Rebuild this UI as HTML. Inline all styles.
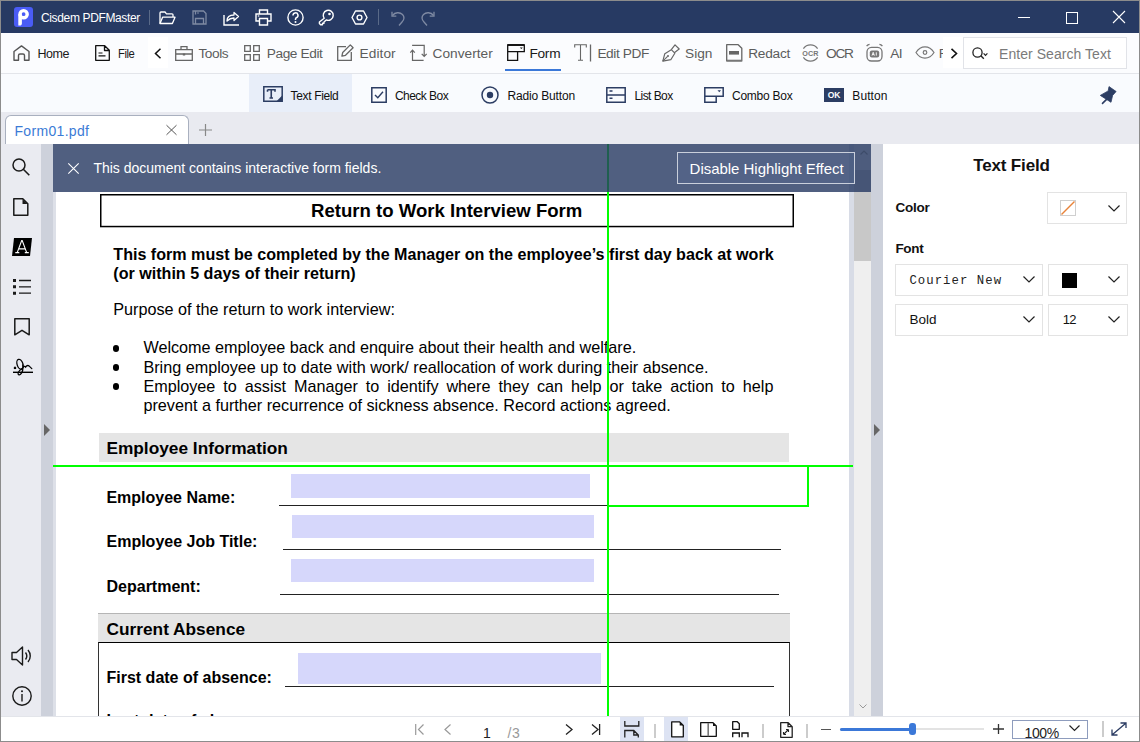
<!DOCTYPE html>
<html><head><meta charset="utf-8">
<style>
*{margin:0;padding:0;box-sizing:border-box}
html,body{width:1140px;height:742px;overflow:hidden;background:#fff}
body{position:relative;font-family:"Liberation Sans",sans-serif}
.a{position:absolute}
svg{position:absolute;overflow:visible}
.t{position:absolute;white-space:nowrap;line-height:1}
.doc{font-family:'Liberation Sans',sans-serif;color:#000}
</style></head><body>
<!-- window border -->
<div class="a" style="left:0;top:0;width:1140px;height:742px;border:1px solid #8c8c8c;z-index:50;pointer-events:none"></div>

<!-- TITLE BAR -->
<div class="a" style="left:0;top:0;width:1140px;height:33px;background:#273a63"></div>
<svg style="left:14px;top:7px" width="19" height="20" viewBox="0 0 19 20"><rect x="0" y="0" width="19" height="20" rx="3" fill="#4a5cf6"/><circle cx="9.6" cy="7.2" r="3.6" fill="none" stroke="#fff" stroke-width="3.4"/><path d="M4.3 7.2h3.6v9.2c0 1-.8 2.2-2 2.2h-1.6z" fill="#fff"/></svg>
<div class="t" style="left:41px;top:11.7px;font-size:12px;color:#fff;font-weight:normal;font-family:'Liberation Sans',sans-serif;letter-spacing:-0.36px">Cisdem PDFMaster</div>

<div class="a" style="left:149px;top:10px;width:1px;height:15px;background:#5a6a88"></div>


<!-- title icons -->
<svg style="left:159px;top:11px" width="17" height="14" viewBox="0 0 17 14"><path d="M1 12.5V2a1 1 0 0 1 1-1h4l1.5 1.8H13a1 1 0 0 1 1 1V6" fill="none" stroke="#fff" stroke-width="1.3"/><path d="M1 12.5l2.6-6.3h12.4l-2.6 6.3z" fill="none" stroke="#fff" stroke-width="1.3" stroke-linejoin="round"/></svg>
<svg style="left:192px;top:10px" width="15" height="15" viewBox="0 0 15 15"><path d="M1 1h10.5L14 3.5V14H1z M3.5 14V8.5h8V14 M3.5 1v3.5" fill="none" stroke="#7f8aa3" stroke-width="1.3"/><path d="M5 3h2" stroke="#7f8aa3" stroke-width="1"/></svg>
<svg style="left:223px;top:10px" width="17" height="16" viewBox="0 0 17 16"><path d="M1 5v10h15" fill="none" stroke="#fff" stroke-width="1.4"/><path d="M4 11c0-4 3-6 7-6V2.5l4.5 4-4.5 4V8c-3 0-5 1-7 3z" fill="none" stroke="#fff" stroke-width="1.3" stroke-linejoin="round"/></svg>
<svg style="left:255px;top:9px" width="17" height="17" viewBox="0 0 17 17"><path d="M4.5 4.5V1h8v3.5 M4.5 12H1V5h15v7h-3.5 M4.5 9.5h8V16h-8z" fill="none" stroke="#fff" stroke-width="1.4"/><path d="M2.8 7h1.5" stroke="#fff" stroke-width="1.2"/></svg>
<svg style="left:287px;top:9px" width="17" height="17" viewBox="0 0 17 17"><circle cx="8.5" cy="8.5" r="7.6" fill="none" stroke="#fff" stroke-width="1.4"/><path d="M6 6.4a2.5 2.5 0 1 1 3.4 2.3c-.7.3-.9.8-.9 1.6v.6" fill="none" stroke="#fff" stroke-width="1.5"/><circle cx="8.5" cy="13" r="1" fill="#fff"/></svg>
<svg style="left:318px;top:9px" width="17" height="17" viewBox="0 0 17 17"><path d="M6.2 9.3a5 5 0 1 1 2 1.6L6 13v1.3H4.5v1.5H2.6l-1.2-1.2V13z" fill="none" stroke="#fff" stroke-width="1.4" stroke-linejoin="round"/><circle cx="11.5" cy="5" r="1.3" fill="#fff"/></svg>
<svg style="left:351px;top:10px" width="17" height="15" viewBox="0 0 17 15"><path d="M4.5 1h8L16 7.5 12.5 14h-8L1 7.5z" fill="none" stroke="#fff" stroke-width="1.4" stroke-linejoin="round"/><circle cx="8.5" cy="7.5" r="2.4" fill="none" stroke="#fff" stroke-width="1.4"/></svg>
<div class="a" style="left:378px;top:9px;width:1px;height:16px;background:#5a6a88"></div>
<svg style="left:391px;top:11px" width="14" height="15" viewBox="0 0 14 15"><path d="M1.5 4.5C4 1 9 1 11.5 3.5c2 2.2 1.8 5-0.5 7.5L8 14.5" fill="none" stroke="#7f8aa3" stroke-width="1.3"/><path d="M1 .8v4.3h4.3" fill="none" stroke="#7f8aa3" stroke-width="1.3"/></svg>
<svg style="left:421px;top:11px" width="14" height="15" viewBox="0 0 14 15"><path d="M12.5 4.5C10 1 5 1 2.5 3.5c-2 2.2-1.8 5 .5 7.5L6 14.5" fill="none" stroke="#7f8aa3" stroke-width="1.3"/><path d="M13 .8v4.3H8.7" fill="none" stroke="#7f8aa3" stroke-width="1.3"/></svg>
<div class="a" style="left:1018px;top:17px;width:12px;height:1px;background:#fff"></div>
<div class="a" style="left:1066px;top:12px;width:12px;height:12px;border:1px solid #fff"></div>
<svg style="left:1113px;top:11px" width="12" height="12" viewBox="0 0 12 12"><path d="M0 0L12 12M12 0L0 12" stroke="#fff" stroke-width="1.1"/></svg>
<div class="a" style="left:0;top:33px;width:1140px;height:40px;background:#fbfcfe"></div>
<div class="a" style="left:0;top:73px;width:1140px;height:1px;background:#e3e5ea"></div>
<!--TOOLBAR-->
<svg style="left:13px;top:45px" width="17" height="16" viewBox="0 0 17 16"><path d="M1 15.2V6.5L8.5 .9 16 6.5v8.7h-4.5V10.5a1.5 1.5 0 0 0-1.5-1.5H7a1.5 1.5 0 0 0-1.5 1.5v4.7z" fill="none" stroke="#555" stroke-width="1.4" stroke-linejoin="round"/></svg>
<div class="t" style="left:37.5px;top:47.6px;font-size:12.5px;color:#1a1a1a;font-weight:normal;font-family:'Liberation Sans',sans-serif;letter-spacing:-0.5px">Home</div>
<svg style="left:95px;top:45px" width="15" height="16" viewBox="0 0 15 16"><path d="M.7 .7h9l4.6 4.6v10H.7z M9.5 .7v4.8h4.8" fill="none" stroke="#111" stroke-width="1.3" stroke-linejoin="round"/><path d="M3.5 8h4M3.5 10.8h7" stroke="#111" stroke-width="1.2"/></svg>
<div class="t" style="left:118px;top:47.6px;font-size:12.5px;color:#1a1a1a;font-weight:normal;font-family:'Liberation Sans',sans-serif;letter-spacing:-0.5px;transform:scaleX(0.9);transform-origin:0 0">File</div>
<div class="a" style="left:148px;top:37px;width:20px;height:31px;background:#fff"></div>
<svg style="left:154px;top:48px" width="8" height="11" viewBox="0 0 8 11"><path d="M6.5 .8L1.5 5.5l5 4.7" fill="none" stroke="#111" stroke-width="1.5"/></svg>
<svg style="left:175px;top:46px" width="18" height="15" viewBox="0 0 18 15"><path d="M.7 3.7h16.6v10.6H.7z M.7 8h16.6 M6 3.7V.7h6v3" fill="none" stroke="#666" stroke-width="1.3"/><path d="M7.8 7.5h2.4v2H7.8z" fill="#666"/></svg>
<div class="t" style="left:198.4px;top:46.8px;font-size:13.7px;color:#5c5c5c;font-weight:normal;font-family:'Liberation Sans',sans-serif;letter-spacing:-0.43px">Tools</div>
<svg style="left:244px;top:45px" width="16" height="16" viewBox="0 0 16 16"><path d="M.7 .7h5.6v5.6H.7z M9.7 .7h5.6v5.6H9.7z M.7 9.7h5.6v5.6H.7z M9.7 9.7h5.6v5.6H9.7z" fill="none" stroke="#666" stroke-width="1.3"/></svg>
<div class="t" style="left:266.7px;top:46.8px;font-size:13.7px;color:#5c5c5c;font-weight:normal;font-family:'Liberation Sans',sans-serif;letter-spacing:-0.39px">Page Edit</div>
<svg style="left:337px;top:44px" width="17" height="17" viewBox="0 0 17 17"><path d="M9 2.7H.7v13.6h13.6V8" fill="none" stroke="#666" stroke-width="1.3"/><path d="M13.3.9l2.8 2.8-7.6 7.6-3.6.8.8-3.6z" fill="none" stroke="#666" stroke-width="1.3" stroke-linejoin="round"/></svg>
<div class="t" style="left:359.5px;top:46.8px;font-size:13.7px;color:#5c5c5c;font-weight:normal;font-family:'Liberation Sans',sans-serif;letter-spacing:0.08px">Editor</div>
<svg style="left:410px;top:44px" width="18" height="18" viewBox="0 0 18 18"><path d="M2.5 6.2V16.3h11.1 M.3 8.6L2.5 6.2l2.3 2.4" fill="none" stroke="#666" stroke-width="1.2"/><path d="M2.1 1.3h12.1v11 M11.7 9.8l2.5 2.5 2.5-2.5" fill="none" stroke="#666" stroke-width="1.2"/></svg>
<div class="t" style="left:432.6px;top:46.8px;font-size:13.7px;color:#5c5c5c;font-weight:normal;font-family:'Liberation Sans',sans-serif;letter-spacing:0.01px">Converter</div>
<svg style="left:507px;top:44px" width="18" height="17" viewBox="0 0 18 17"><path d="M.7 1h16.6v6.6H10.6v8.7H.7z M.7 7.6h9.9" fill="none" stroke="#111" stroke-width="1.3"/><path d="M.7 1h16.6" stroke="#111" stroke-width="1.8"/><path d="M12.8 3.4h3l-1.5 1.6z" fill="#111"/></svg>
<div class="t" style="left:529.5px;top:46.8px;font-size:13.7px;color:#1a1a1a;font-weight:normal;font-family:'Liberation Sans',sans-serif;letter-spacing:-0.30px">Form</div>
<div class="a" style="left:505px;top:69px;width:56px;height:2px;background:#3b78d8"></div>
<svg style="left:574px;top:44px" width="18" height="18" viewBox="0 0 18 18"><path d="M.7 3.5V.8h11.6v2.7 M6.5 .8v15.5 M4 16.3h5" fill="none" stroke="#666" stroke-width="1.1"/><path d="M16.5 .5v17" stroke="#666" stroke-width="1.3"/></svg>
<div class="t" style="left:597.4px;top:46.8px;font-size:13.7px;color:#5c5c5c;font-weight:normal;font-family:'Liberation Sans',sans-serif;letter-spacing:-0.40px">Edit PDF</div>
<svg style="left:662px;top:44px" width="18" height="18" viewBox="0 0 18 18"><path d="M.8 17.2l2-7.5 6.5-4 3.5 3.5-4 6.5z" fill="none" stroke="#666" stroke-width="1.2" stroke-linejoin="round"/><path d="M9.3 5.7L13 .8l4.2 4.2-4.9 3.7" fill="none" stroke="#666" stroke-width="1.2" stroke-linejoin="round"/><path d="M.8 17.2l4.8-4.8" stroke="#666" stroke-width="1.1"/><circle cx="6" cy="12" r="1" fill="#666"/></svg>
<div class="t" style="left:685px;top:46.8px;font-size:13.7px;color:#5c5c5c;font-weight:normal;font-family:'Liberation Sans',sans-serif;letter-spacing:0.00px">Sign</div>
<svg style="left:726px;top:44px" width="17" height="18" viewBox="0 0 17 18"><path d="M.7 .7h11.5l3.6 3.6v12.6H.7z" fill="none" stroke="#666" stroke-width="1.3" stroke-linejoin="round"/><path d="M.7 16.6h15.1" stroke="#777" stroke-width="1.8"/><path d="M3 7h10v3.6H3z" fill="#666"/></svg>
<div class="t" style="left:748.2px;top:46.8px;font-size:13.7px;color:#5c5c5c;font-weight:normal;font-family:'Liberation Sans',sans-serif;letter-spacing:-0.24px">Redact</div>
<svg style="left:801px;top:43px" width="19" height="20" viewBox="0 0 19 20"><path d="M2.4 5.6A8.6 8.6 0 0 1 16.6 5.6 M16.6 14.4A8.6 8.6 0 0 1 2.4 14.4" fill="none" stroke="#777" stroke-width="1.2"/><text x="9.5" y="12.7" font-size="7.2" font-family="Liberation Sans" fill="#777" text-anchor="middle" font-weight="bold" letter-spacing="0.1">OCR</text></svg>
<div class="t" style="left:826px;top:46.8px;font-size:13.7px;color:#5c5c5c;font-weight:normal;font-family:'Liberation Sans',sans-serif;letter-spacing:-1.25px">OCR</div>
<svg style="left:866px;top:43px" width="17" height="19" viewBox="0 0 17 19"><rect x="1" y="4.3" width="15" height="13.7" rx="4.5" fill="none" stroke="#777" stroke-width="1.3"/><path d="M.6 3.2C1.5 1.8 2.5 1.3 3.6 1.3 M16.4 3.2C15.5 1.8 14.5 1.3 13.4 1.3" fill="none" stroke="#777" stroke-width="1.3"/><rect x="3.8" y="7.5" width="9.4" height="7" rx="2" fill="#777"/><path d="M6 12.6l1.2-3.3 1.2 3.3 M6.4 11.6h1.6 M10.3 9.3v3.3" fill="none" stroke="#fff" stroke-width="0.9"/></svg>
<div class="t" style="left:890.3px;top:46.8px;font-size:13.7px;color:#5c5c5c;font-weight:normal;font-family:'Liberation Sans',sans-serif;letter-spacing:-0.60px">AI</div>
<svg style="left:915px;top:46px" width="20" height="13" viewBox="0 0 20 13"><path d="M1 6.5C3.5 2.5 6.5 .8 10 .8s6.5 1.7 9 5.7c-2.5 4-5.5 5.7-9 5.7S3.5 10.5 1 6.5z" fill="none" stroke="#777" stroke-width="1.2"/><circle cx="10" cy="6.5" r="1.8" fill="none" stroke="#777" stroke-width="1.2"/></svg>
<div class="t" style="left:938.7px;top:46.8px;font-size:13.7px;color:#5c5c5c;font-weight:normal;font-family:'Liberation Sans',sans-serif;letter-spacing:0.00px">F</div>
<div class="a" style="left:943px;top:37px;width:20px;height:31px;background:#fff"></div>
<svg style="left:950px;top:48px" width="8" height="11" viewBox="0 0 8 11"><path d="M1.5 .8l5 4.7-5 4.7" fill="none" stroke="#111" stroke-width="1.6"/></svg>
<div class="a" style="left:963px;top:37px;width:164px;height:32px;background:#fff;border:1px solid #e1e3e8"></div>
<svg style="left:972px;top:47px" width="16" height="13" viewBox="0 0 16 13"><circle cx="5.5" cy="5.5" r="4.6" fill="none" stroke="#222" stroke-width="1.3"/><path d="M8.8 8.8l3 3" stroke="#222" stroke-width="1.4"/><path d="M11.6 6.4l1.9 1.9 1.9-1.9" fill="none" stroke="#222" stroke-width="1.2"/></svg>
<div class="t" style="left:999px;top:46.6px;font-size:14px;color:#7a7a7a;font-weight:normal;font-family:'Liberation Sans',sans-serif;letter-spacing:0.05px">Enter Search Text</div>

<div class="a" style="left:0;top:74px;width:1140px;height:38px;background:#f9fbfe"></div>
<!--FORMROW-->
<div class="a" style="left:249px;top:74px;width:103px;height:38px;background:#e8eef9"></div>
<svg style="left:263px;top:86px" width="20" height="16" viewBox="0 0 20 16"><path d="M.8 .8h18.4v14.4H.8z" fill="none" stroke="#2c3d63" stroke-width="1.5"/><path d="M19.2 9.5v5.7h-5.7z" fill="#2c3d63"/><path d="M4.5 3.8h7.5v2 M8.25 3.8v8.2 M6.5 12h3.5 M4.5 3.8v2" fill="none" stroke="#2c3d63" stroke-width="1.6"/></svg>
<div class="t" style="left:290.6px;top:90.0px;font-size:12px;color:#111;font-weight:normal;font-family:'Liberation Sans',sans-serif;letter-spacing:-0.35px">Text Field</div>
<svg style="left:371px;top:87px" width="16" height="16" viewBox="0 0 16 16"><path d="M.8 .8h14.4v14.4H.8z" fill="none" stroke="#2c3d63" stroke-width="1.5"/><path d="M4 8l2.8 2.8L12 4.8" fill="none" stroke="#2c3d63" stroke-width="1.4"/></svg>
<div class="t" style="left:395px;top:90.0px;font-size:12px;color:#111;font-weight:normal;font-family:'Liberation Sans',sans-serif;letter-spacing:-0.55px">Check Box</div>
<svg style="left:481px;top:86px" width="18" height="18" viewBox="0 0 18 18"><circle cx="9" cy="9" r="8" fill="none" stroke="#2c3d63" stroke-width="1.5"/><circle cx="9" cy="9" r="3.2" fill="#2c3d63"/></svg>
<div class="t" style="left:507.4px;top:90.0px;font-size:12px;color:#111;font-weight:normal;font-family:'Liberation Sans',sans-serif;letter-spacing:-0.15px">Radio Button</div>
<svg style="left:606px;top:87px" width="20" height="16" viewBox="0 0 20 16"><path d="M.8 .8h18.4v14.4H.8z M.8 8h18.4" fill="none" stroke="#2c3d63" stroke-width="1.5"/><path d="M3.5 4h3M3.5 11.3h3" stroke="#2c3d63" stroke-width="1.5"/></svg>
<div class="t" style="left:634.4px;top:90.0px;font-size:12px;color:#111;font-weight:normal;font-family:'Liberation Sans',sans-serif;letter-spacing:-0.55px">List Box</div>
<svg style="left:704px;top:87px" width="20" height="16" viewBox="0 0 20 16"><path d="M.8 .8h18.4v8.4h-7v6H.8z M.8 9.2h11.4" fill="none" stroke="#2c3d63" stroke-width="1.5"/><path d="M13.5 3.3h3.5l-1.75 1.9z" fill="#2c3d63"/></svg>
<div class="t" style="left:732px;top:90.0px;font-size:12px;color:#111;font-weight:normal;font-family:'Liberation Sans',sans-serif;letter-spacing:-0.25px">Combo Box</div>
<div class="a" style="left:824px;top:88px;width:20px;height:14px;background:#2c3d63"></div>
<div class="t" style="left:824px;top:91px;width:20px;text-align:center;font-size:8.5px;font-weight:bold;color:#fff">OK</div>
<div class="t" style="left:852.3px;top:90.0px;font-size:12px;color:#111;font-weight:normal;font-family:'Liberation Sans',sans-serif;letter-spacing:0.1px">Button</div>
<svg style="left:1099px;top:86px" width="18" height="18" viewBox="0 0 18 18"><path d="M10 .6L17.1 5.5 13.6 9.4 12 16.3 7.6 13.4 1.3 9.4 9.2 4.9z" fill="#2c3d63" stroke="#2c3d63" stroke-width="0.8" stroke-linejoin="round"/><path d="M8.6 12.4L3.5 17.4" stroke="#2c3d63" stroke-width="1.6" stroke-linecap="round"/></svg>
<div class="a" style="left:0;top:112px;width:1140px;height:32px;background:#e9eaf0"></div>

<!--TAB-->
<div class="a" style="left:5px;top:115px;width:184px;height:29px;background:#fff;border:1px solid #a9b0bf;border-bottom:none;border-radius:6px 6px 0 0"></div>
<div class="t" style="left:14.5px;top:123.6px;font-size:14px;color:#3b7bd6;font-weight:normal;font-family:'Liberation Sans',sans-serif;letter-spacing:0.32px">Form01.pdf</div>
<svg style="left:166px;top:125px" width="11" height="10" viewBox="0 0 11 10"><path d="M.5 .2l10 9.6M10.5 .2l-10 9.6" stroke="#555" stroke-width="1"/></svg>
<svg style="left:199px;top:124px" width="13" height="12" viewBox="0 0 13 12"><path d="M6.5 0v12M0 6h13" stroke="#888" stroke-width="1.2"/></svg>
<!-- main -->
<div class="a" style="left:0;top:144px;width:41px;height:572px;background:#eaebf1"></div>
<div class="a" style="left:41px;top:144px;width:12px;height:572px;background:#cdd1db"></div>
<div class="a" style="left:53px;top:144px;width:818px;height:572px;background:#fff"></div>
<div class="a" style="left:53px;top:192px;width:3px;height:524px;background:#dde0e8"></div>
<div class="a" style="left:849px;top:144px;width:5px;height:572px;background:#d8dce6"></div>
<div class="a" style="left:854px;top:144px;width:17px;height:572px;background:#efefef"></div>
<div class="a" style="left:854px;top:170px;width:17px;height:91px;background:#c8c8c8"></div>
<div class="a" style="left:871px;top:144px;width:12px;height:572px;background:#cdd1db"></div>
<div class="a" style="left:883px;top:144px;width:257px;height:572px;background:#fff"></div>
<!--DOC-->
<div class="a" style="left:0;top:0;width:854px;height:716px;overflow:hidden">
<svg style="left:0;top:0" width="1140" height="742"><rect x="100.75" y="194.75" width="692.5" height="31.8" fill="none" stroke="#000" stroke-width="1.5"/></svg>
<div class="t" style="left:311px;top:202.0px;font-size:18.6px;color:#000;font-weight:bold;font-family:'Liberation Sans',sans-serif;">Return to Work Interview Form</div>
<div class="t" style="left:113.3px;top:246.3px;font-size:16.1px;color:#000;font-weight:bold;font-family:'Liberation Sans',sans-serif;">This form must be completed by the Manager on the employee’s first day back at work</div>
<div class="t" style="left:113.3px;top:265.0px;font-size:16.1px;color:#000;font-weight:bold;font-family:'Liberation Sans',sans-serif;">(or within 5 days of their return)</div>
<div class="t" style="left:113.3px;top:300.7px;font-size:16.2px;color:#000;font-weight:normal;font-family:'Liberation Sans',sans-serif;">Purpose of the return to work interview:</div>
<div class="a" style="left:113px;top:345.2px;width:6.4px;height:6.4px;border-radius:50%;background:#000"></div>
<div class="a" style="left:113px;top:364.4px;width:6.4px;height:6.4px;border-radius:50%;background:#000"></div>
<div class="a" style="left:113px;top:383.4px;width:6.4px;height:6.4px;border-radius:50%;background:#000"></div>
<div class="t" style="left:143.4px;top:339.3px;font-size:16.2px;color:#000;font-weight:normal;font-family:'Liberation Sans',sans-serif;">Welcome employee back and enquire about their health and welfare.</div>
<div class="t" style="left:143.4px;top:359.1px;font-size:16.2px;color:#000;font-weight:normal;font-family:'Liberation Sans',sans-serif;">Bring employee up to date with work/ reallocation of work during their absence.</div>
<div class="t" style="left:143.4px;top:377.9px;width:630px;font-size:16.2px;text-align:justify;text-align-last:justify;white-space:normal">Employee to assist Manager to identify where they can help or take action to help</div>
<div class="t" style="left:143.4px;top:396.6px;font-size:16.2px;color:#000;font-weight:normal;font-family:'Liberation Sans',sans-serif;">prevent a further recurrence of sickness absence. Record actions agreed.</div>
<div class="a" style="left:99px;top:433px;width:690px;height:29px;background:#e5e5e5"></div>
<div class="t" style="left:106.4px;top:439.7px;font-size:17.3px;color:#000;font-weight:bold;font-family:'Liberation Sans',sans-serif;">Employee Information</div>
<div class="t" style="left:106.4px;top:489.7px;font-size:16px;color:#000;font-weight:bold;font-family:'Liberation Sans',sans-serif;">Employee Name:</div>
<div class="t" style="left:106.5px;top:533.5px;font-size:16px;color:#000;font-weight:bold;font-family:'Liberation Sans',sans-serif;">Employee Job Title:</div>
<div class="t" style="left:106.5px;top:578.6px;font-size:16px;color:#000;font-weight:bold;font-family:'Liberation Sans',sans-serif;">Department:</div>
<div class="a" style="left:291px;top:474px;width:299px;height:24px;background:#d6d7fb"></div>
<div class="a" style="left:291.5px;top:515px;width:302px;height:23px;background:#d6d7fb"></div>
<div class="a" style="left:290.5px;top:559px;width:303px;height:23px;background:#d6d7fb"></div>
<div class="a" style="left:279px;top:504.5px;width:329px;height:1.3px;background:#222"></div>
<div class="a" style="left:282.5px;top:549px;width:498.5px;height:1.3px;background:#222"></div>
<div class="a" style="left:279.5px;top:594px;width:499px;height:1.3px;background:#222"></div>
<div class="a" style="left:98.2px;top:613px;width:691.5px;height:29px;background:#e5e5e5;border-top:1px solid #b5b5b5"></div>
<div class="t" style="left:106.5px;top:620.7px;font-size:17.3px;color:#000;font-weight:bold;font-family:'Liberation Sans',sans-serif;">Current Absence</div>
<div class="a" style="left:98.2px;top:641.8px;width:691.8px;height:80px;border:1.5px solid #333;border-top:1.6px solid #000;border-bottom:none"></div>
<div class="t" style="left:106.5px;top:670.2px;font-size:16px;color:#000;font-weight:bold;font-family:'Liberation Sans',sans-serif;">First date of absence:</div>
<div class="a" style="left:298px;top:653px;width:302.7px;height:31px;background:#d6d7fb"></div>
<div class="a" style="left:284.7px;top:685.8px;width:489px;height:1.3px;background:#222"></div>
<div class="t" style="left:106.5px;top:712.5px;font-size:16px;color:#000;font-weight:bold;font-family:'Liberation Sans',sans-serif;">Last date of absence:</div>
<div class="a" style="left:607px;top:465px;width:202px;height:41.5px;background:#fff;border:2px solid #00ff00"></div>
<div class="a" style="left:53px;top:465px;width:800px;height:2px;background:#00ff00"></div>
<div class="a" style="left:607px;top:144px;width:2px;height:572px;background:#00ff00"></div>
</div>
<!--NOTIF-->
<div class="a" style="left:53px;top:144px;width:818px;height:48px;background:rgba(39,58,99,0.81)"></div>
<svg style="left:68px;top:163px" width="11" height="11" viewBox="0 0 11 11"><path d="M.3 .3l10.4 10.4M10.7 .3L.3 10.7" stroke="#fff" stroke-width="1.1"/></svg>
<div class="t" style="left:93.4px;top:161.4px;font-size:14px;color:#fff;font-weight:normal;font-family:'Liberation Sans',sans-serif;">This document contains interactive form fields.</div>
<div class="a" style="left:677px;top:152px;width:178px;height:32px;border:1px solid #c9cfdb;background:rgba(90,110,150,0.35)"></div>
<div class="t" style="left:689.6px;top:161.1px;font-size:15px;color:#fff;font-weight:normal;font-family:'Liberation Sans',sans-serif;letter-spacing:-0.03px">Disable Highlight Effect</div>
<svg style="left:860px;top:150px" width="8" height="5" viewBox="0 0 8 5"><path d="M.5 4.5L4 1l3.5 3.5" fill="none" stroke="#3e4c6a" stroke-width="1.2"/></svg>
<svg style="left:859px;top:704px" width="8" height="5" viewBox="0 0 8 5"><path d="M.5 .5L4 4l3.5-3.5" fill="none" stroke="#999" stroke-width="1"/></svg>
<!--SIDEBAR-->
<svg style="left:12px;top:158px" width="18" height="18" viewBox="0 0 18 18"><circle cx="7" cy="7" r="6" fill="none" stroke="#1a1a1a" stroke-width="1.5"/><path d="M11.3 11.3l6 6" stroke="#1a1a1a" stroke-width="1.6"/></svg>
<svg style="left:13px;top:198px" width="16" height="18" viewBox="0 0 16 18"><path d="M.8 .8h9l5 5v11.4H.8z" fill="none" stroke="#1a1a1a" stroke-width="1.5" stroke-linejoin="round"/><path d="M9.5 1v5h5z" fill="#1a1a1a"/></svg>
<svg style="left:12px;top:238px" width="20" height="18" viewBox="0 0 20 18"><path d="M2 0h18l-2 18H0z" fill="#000"/><path d="M5.2 14.6L9.7 2.6h.5l4.5 12 M6.8 10.9h6.4 M3.3 14.6h4 M12.8 14.6h4" fill="none" stroke="#fff" stroke-width="1.1"/></svg>
<svg style="left:13px;top:279px" width="18" height="16" viewBox="0 0 18 16"><path d="M0 0h3v3H0z M0 6.3h3v3H0z M0 12.7h3v3H0z" fill="#1a1a1a"/><path d="M6 1.5h12M6 7.8h12M6 14.2h12" stroke="#1a1a1a" stroke-width="1.3"/></svg>
<svg style="left:14px;top:318px" width="16" height="18" viewBox="0 0 16 18"><path d="M.8 .8h14.4v16l-7.2-4.5-7.2 4.5z" fill="none" stroke="#1a1a1a" stroke-width="1.5" stroke-linejoin="round"/></svg>
<svg style="left:12px;top:356px" width="24" height="22" viewBox="0 0 24 22"><path d="M1 16.3h20" stroke="#000" stroke-width="1.4"/><path d="M2 10.9l2 2M4 10.9l-2 2" stroke="#000" stroke-width="1.1"/><ellipse cx="8" cy="8.2" rx="2.9" ry="5" transform="rotate(-18 8 8.2)" fill="none" stroke="#000" stroke-width="1.3"/><path d="M10.8 9C11.3 13 10.5 16.5 8.5 18.3 7.2 19.4 5.6 18.8 6.2 16.6 6.7 15 8.5 13.5 10.6 12.5 M10.6 12.5C11.8 10.2 13 9.8 13.6 11 14.6 9.6 15.8 9.2 17 9.9L19.8 12.6" fill="none" stroke="#000" stroke-width="1.3" stroke-linecap="round"/></svg>
<svg style="left:11px;top:646px" width="22" height="20" viewBox="0 0 22 20"><path d="M1 6.5h4.5L11.5 1v18l-6-5.5H1z" fill="none" stroke="#1a1a1a" stroke-width="1.4" stroke-linejoin="round"/><path d="M14.5 6.5c1.5 2 1.5 5 0 7 M17 4c3 3.5 3 8.5 0 12" fill="none" stroke="#1a1a1a" stroke-width="1.4"/></svg>
<svg style="left:12px;top:686px" width="20" height="20" viewBox="0 0 20 20"><circle cx="10" cy="10" r="9.2" fill="none" stroke="#1a1a1a" stroke-width="1.4"/><path d="M10 8v7.5" stroke="#1a1a1a" stroke-width="1.4"/><circle cx="10" cy="5.3" r="1" fill="#1a1a1a"/></svg>
<svg style="left:44px;top:424px" width="6" height="12" viewBox="0 0 6 12"><path d="M0 0l6 6L0 12z" fill="#666"/></svg>
<svg style="left:874px;top:424px" width="6" height="12" viewBox="0 0 6 12"><path d="M0 0l6 6L0 12z" fill="#666"/></svg>
<div class="a" style="left:0;top:716px;width:1140px;height:26px;background:#fff;border-top:1px solid #e3e5ea"></div>
<!--STATUS-->
<svg style="left:415px;top:724px" width="10" height="11" viewBox="0 0 10 11"><path d="M.7 0v11" stroke="#999" stroke-width="1.2"/><path d="M8.5 .5L3.5 5.5l5 5" fill="none" stroke="#999" stroke-width="1.2"/></svg>
<svg style="left:443px;top:724px" width="9" height="11" viewBox="0 0 9 11"><path d="M7.5 .5L2 5.5l5.5 5" fill="none" stroke="#999" stroke-width="1.2"/></svg>
<div class="t" style="left:483px;top:725.9px;font-size:14px;color:#222;font-weight:normal;font-family:'Liberation Sans',sans-serif;">1</div>
<div class="t" style="left:507.6px;top:725.9px;font-size:14px;color:#999;font-weight:normal;font-family:'Liberation Sans',sans-serif;letter-spacing:0.5px">/3</div>
<svg style="left:565px;top:724px" width="9" height="11" viewBox="0 0 9 11"><path d="M1 .5l6 5-6 5" fill="none" stroke="#222" stroke-width="1.3"/></svg>
<svg style="left:591px;top:724px" width="10" height="11" viewBox="0 0 10 11"><path d="M1 .5l6 5-6 5" fill="none" stroke="#222" stroke-width="1.3"/><path d="M8.6 0v11" stroke="#222" stroke-width="1.3"/></svg>
<div class="a" style="left:620px;top:717px;width:24px;height:25px;background:#dde3f3"></div>
<svg style="left:624px;top:721px" width="16" height="17" viewBox="0 0 16 17"><path d="M.8 0v5h14V0 M.8 16.5V9.5h9l4.5 4.5v2.5 M9.8 9.5v4.5h4.5" fill="none" stroke="#222" stroke-width="1.3"/></svg>
<div class="a" style="left:654px;top:724px;width:1.5px;height:14px;background:#ccc"></div>
<div class="a" style="left:664px;top:717px;width:24px;height:25px;background:#dde3f3"></div>
<svg style="left:671px;top:721px" width="13" height="17" viewBox="0 0 13 17"><path d="M.7 .9h8l3.6 3.6v11.3H.7z" fill="#fff" stroke="#111" stroke-width="1.3" stroke-linejoin="round"/><path d="M8.7 1v3.5h3.5z" fill="#111"/></svg>
<svg style="left:700px;top:722px" width="17" height="15" viewBox="0 0 17 15"><path d="M.7 .7h12.3l3.3 3.3v10.3H.7z" fill="#fff" stroke="#111" stroke-width="1.3" stroke-linejoin="round"/><path d="M13 .8v3.2h3.2z" fill="#111"/><path d="M8.2 1v13.3" stroke="#777" stroke-width="1.6"/></svg>
<svg style="left:732px;top:721px" width="17" height="17" viewBox="0 0 17 17"><path d="M.7 8.3V.7h4.6l2 2v5.6z" fill="#fff" stroke="#111" stroke-width="1.3" stroke-linejoin="round"/><path d="M.7 16.3V12h6.6v4.3 M10 16.3V12h6v4.3" fill="none" stroke="#111" stroke-width="1.3"/></svg>
<div class="a" style="left:762px;top:724px;width:1.5px;height:14px;background:#ccc"></div>
<svg style="left:780px;top:722px" width="13" height="16" viewBox="0 0 13 16"><path d="M.7 .7h7.5l4 4v10.6H.7z M8 .7v4h4" fill="none" stroke="#222" stroke-width="1.3" stroke-linejoin="round"/><path d="M3.5 12.5l5-5 M3.5 12.5v-2.5 M3.5 12.5h2.5 M8.5 7.5v2.5M8.5 7.5H6" fill="none" stroke="#222" stroke-width="1.1"/></svg>
<div class="a" style="left:806px;top:724px;width:1.5px;height:14px;background:#ccc"></div>
<div class="a" style="left:821px;top:728.5px;width:10px;height:1.3px;background:#555"></div>
<div class="a" style="left:840px;top:728px;width:144px;height:2px;background:#e3e3e3"></div>
<div class="a" style="left:840px;top:727.5px;width:71px;height:3px;background:#3b78d8;border-radius:1.5px"></div>
<div class="a" style="left:909px;top:723px;width:6.5px;height:12px;background:#3b78d8;border-radius:3px"></div>
<svg style="left:993px;top:724px" width="11" height="10" viewBox="0 0 11 10"><path d="M5.5 0v10M0 5h11" stroke="#333" stroke-width="1.3"/></svg>
<div class="a" style="left:1012px;top:719.5px;width:75.5px;height:19px;border:1px solid #8e9cbd;background:#fff;overflow:hidden"><div class="t" style="left:11.6px;top:5.6px;font-size:14px;color:#222;letter-spacing:-0.4px">100%</div></div>
<svg style="left:1069px;top:725px" width="11" height="7" viewBox="0 0 11 7"><path d="M.5 .5L5.5 5.5l5-5" fill="none" stroke="#222" stroke-width="1.2"/></svg>
<div class="a" style="left:1102px;top:721px;width:1.5px;height:16px;background:#ccc"></div>
<svg style="left:1111px;top:722px" width="16" height="14" viewBox="0 0 16 14"><path d="M1.5 12.5L14.5 1.5 M9.5 1h5.5v5 M1 7.5v5.5h5.5" fill="none" stroke="#2c3d63" stroke-width="1.3"/></svg>
<!--RIGHT-->
<div class="t" style="left:973.2px;top:156.6px;font-size:17px;color:#111;font-weight:bold;font-family:'Liberation Sans',sans-serif;letter-spacing:-0.15px">Text Field</div>
<div class="t" style="left:895.4px;top:201.4px;font-size:13.5px;color:#111;font-weight:bold;font-family:'Liberation Sans',sans-serif;letter-spacing:-0.2px">Color</div>
<div class="a" style="left:1047px;top:192px;width:80px;height:32px;border:1px solid #e3e3e3;background:#fff"></div>
<svg style="left:1060px;top:200px" width="16" height="16" viewBox="0 0 16 16"><rect x=".5" y=".5" width="15" height="15" fill="#fff" stroke="#cfcfcf"/><path d="M1.5 14.5L14.5 1.5" stroke="#e8833a" stroke-width="1.4"/></svg>
<svg style="left:1108px;top:205px" width="12" height="7" viewBox="0 0 12 7"><path d="M.5 .5L6 6l5.5-5.5" fill="none" stroke="#222" stroke-width="1.2"/></svg>
<div class="t" style="left:895.4px;top:241.6px;font-size:13.5px;color:#111;font-weight:bold;font-family:'Liberation Sans',sans-serif;letter-spacing:-0.3px">Font</div>
<div class="a" style="left:895px;top:264px;width:148px;height:31.5px;border:1px solid #e3e3e3;background:#fff"></div>
<div class="a" style="left:1048px;top:264px;width:79.5px;height:31.5px;border:1px solid #e3e3e3;background:#fff"></div>
<div class="a" style="left:895px;top:304px;width:148px;height:31.5px;border:1px solid #e3e3e3;background:#fff"></div>
<div class="a" style="left:1048px;top:304px;width:79.5px;height:31.5px;border:1px solid #e3e3e3;background:#fff"></div>
<div class="t" style="left:909.4px;top:274.6px;font-size:12.3px;color:#222;font-weight:normal;font-family:'Liberation Mono',monospace;letter-spacing:1.05px">Courier New</div>
<svg style="left:1023px;top:276px" width="12" height="7" viewBox="0 0 12 7"><path d="M.5 .5L6 6l5.5-5.5" fill="none" stroke="#222" stroke-width="1.2"/></svg>
<div class="a" style="left:1062px;top:273px;width:14.5px;height:14.5px;background:#000"></div>
<svg style="left:1108px;top:276px" width="12" height="7" viewBox="0 0 12 7"><path d="M.5 .5L6 6l5.5-5.5" fill="none" stroke="#222" stroke-width="1.2"/></svg>
<div class="t" style="left:909.4px;top:313.1px;font-size:13.5px;color:#111;font-weight:normal;font-family:'Liberation Sans',sans-serif;letter-spacing:0px">Bold</div>
<svg style="left:1023px;top:316px" width="12" height="7" viewBox="0 0 12 7"><path d="M.5 .5L6 6l5.5-5.5" fill="none" stroke="#222" stroke-width="1.2"/></svg>
<div class="t" style="left:1062.7px;top:313.1px;font-size:13px;color:#111;font-weight:normal;font-family:'Liberation Sans',sans-serif;letter-spacing:-0.6px">12</div>
<svg style="left:1108px;top:316px" width="12" height="7" viewBox="0 0 12 7"><path d="M.5 .5L6 6l5.5-5.5" fill="none" stroke="#222" stroke-width="1.2"/></svg>


</body></html>
